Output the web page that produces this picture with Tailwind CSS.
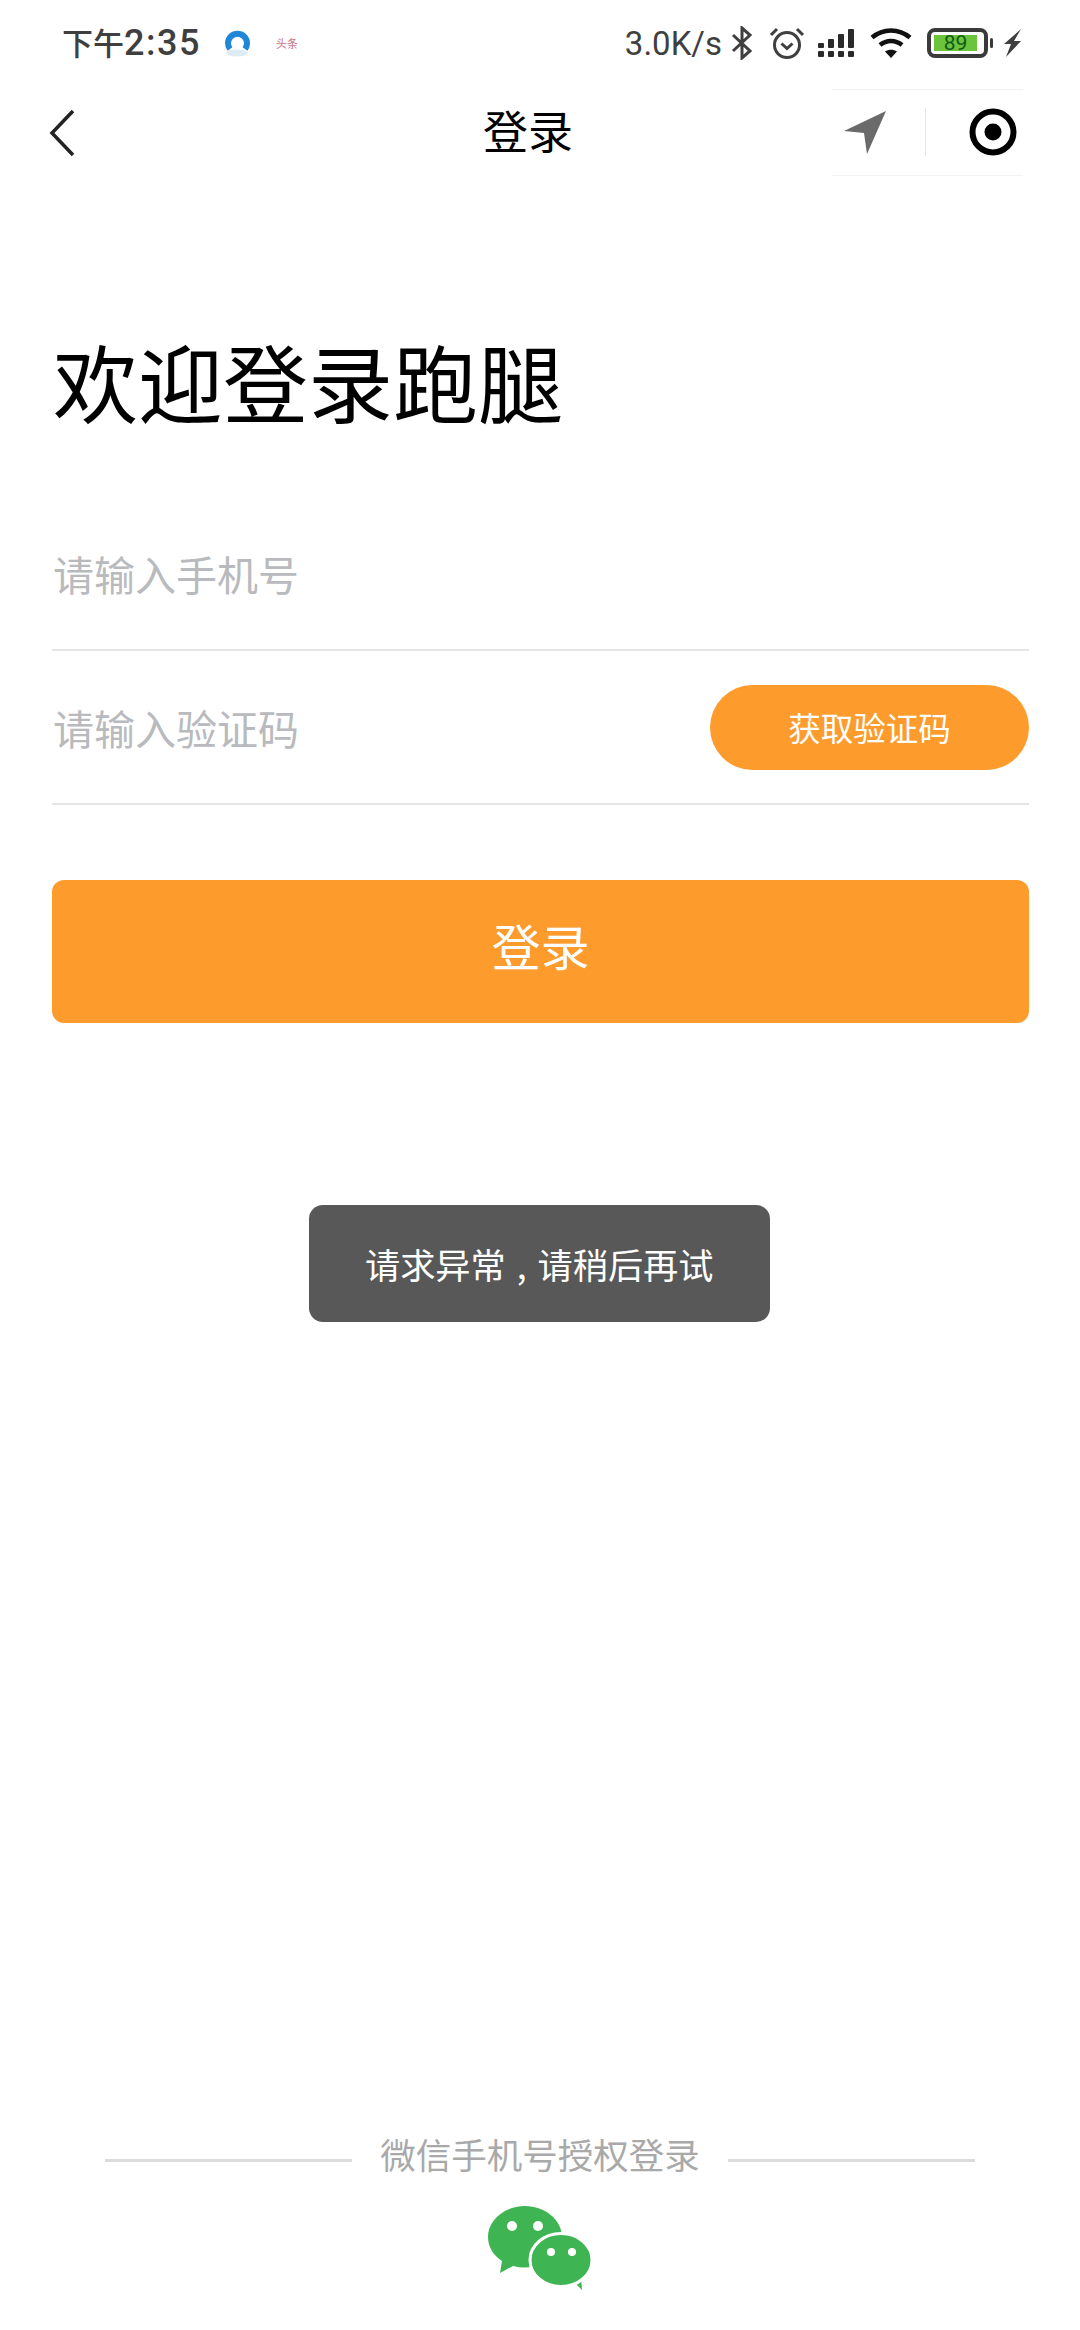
<!DOCTYPE html>
<html lang="zh-CN">
<head>
    <meta charset="UTF-8">
    <meta name="viewport" content="width=device-width, initial-scale=1.0">
    <title>登录</title>
    <script src="https://cdn.jsdelivr.net/npm/@tailwindcss/browser@4"></script>
</head>
<body class="bg-white font-['Noto_Sans_CJK_SC','Noto_Sans',sans-serif]">
    <div class="relative w-[1080px] h-[2330px] flex flex-col overflow-hidden bg-white">
        <!-- Status bar -->
        <div class="h-[86px] flex items-center pl-[62px] pr-[59px] text-[#3f3f3f]">
            <span class="w-[139px] flex items-center whitespace-nowrap font-medium leading-none">
                <span class="text-[31px] mb-[3px]">下午</span>
                <span class="text-[36px] tracking-[1.500px] font-['Roboto',sans-serif]">2:35</span>
            </span>
            <svg class="ml-[23px] w-[26px] h-[28px]" viewBox="0 0 26 28">
                <ellipse cx="13" cy="24" rx="11" ry="3.500" fill="#dcecf2"/>
                <path d="M6 20a9.500 9.500 0 1 1 15 0" fill="none" stroke="#1f86d8" stroke-width="6"/>
            </svg>
            <span class="ml-[26px] text-[11px] leading-none text-[#c9758a]">头条</span>
            <span class="ml-auto text-[33px] leading-none font-['Roboto',sans-serif]">3.0K/s</span>
            <!-- bluetooth -->
            <svg class="ml-[9px] w-[22px] h-[34px]" viewBox="0 0 22 34" fill="none" stroke="#3f3f3f" stroke-width="3">
                <path d="M2 9l17 16-8 7V2l8 7L2 25"/>
            </svg>
            <!-- alarm -->
            <svg class="ml-[16px] w-[36px] h-[34px]" viewBox="0 0 36 34" fill="none" stroke="#3f3f3f" stroke-width="3">
                <circle cx="18" cy="19" r="12.500"/>
                <path d="M12.500 17.500l5.500 5 5.500-5"/>
                <path d="M2 9l6-6M34 9l-6-6"/>
            </svg>
            <!-- signal -->
            <svg class="ml-[13px] w-[36px] h-[28px]" viewBox="0 0 36 28" fill="#2a2a2a">
                <rect x="0" y="14" width="6" height="5" rx="1"/><rect x="0" y="22" width="6" height="6" rx="1"/>
                <rect x="10" y="10" width="6" height="9" rx="1"/><rect x="10" y="22" width="6" height="6" rx="1"/>
                <rect x="20" y="5" width="6" height="14" rx="1"/><rect x="20" y="22" width="6" height="6" rx="1"/>
                <rect x="30" y="0" width="6" height="19" rx="1"/><rect x="30" y="22" width="6" height="6" rx="1"/>
            </svg>
            <!-- wifi -->
            <svg class="ml-[16px] w-[42px] h-[30px]" viewBox="0 0 42 30" fill="none" stroke="#111" stroke-width="4.500">
                <path d="M2 9.500C13 0 29 0 40 9.500"/>
                <path d="M10 17c6.500-5.500 15.500-5.500 22 0"/>
                <path d="M21 30l-6-6.500c3.500-2.500 8.500-2.500 12 0z" fill="#111" stroke="none"/>
            </svg>
            <!-- battery -->
            <div class="ml-[15px] w-[61px] h-[30px] border-[4px] border-[#3a3a3a] rounded-[8px] p-[3px] flex">
                <div class="w-[43px] bg-[#6cc33c] text-[#0f5c14] text-[21px] leading-[16px] text-center font-['Roboto',sans-serif]">89</div>
            </div>
            <div class="ml-[2px] w-[3px] h-[10px] bg-[#3a3a3a] rounded-full"></div>
            <svg class="ml-[10px] w-[18px] h-[28px]" viewBox="0 0 18 28" fill="#3f3f3f">
                <path d="M18 0L1 15h7L3 28l15-16h-7z"/>
            </svg>
        </div>

        <!-- Nav bar -->
        <div class="h-[90px] flex items-center pl-[49px] pr-[57px] pt-[2px]">
            <svg class="w-[26px] h-[48px] mt-[2px]" viewBox="0 0 26 48" fill="none" stroke="#222" stroke-width="3.500">
                <path d="M24 2L3 24l21 22"/>
            </svg>
            <h1 class="ml-[408px] mb-[6px] text-[45px] leading-none font-normal text-black">登录</h1>
            <div class="ml-auto w-[191px] h-[87px] flex items-center border-y border-[#f2f2f2]">
                <div class="w-[93px] pl-[11px] flex">
                    <svg class="w-[44px] h-[44px]" viewBox="0 0 44 44" fill="#6a6a6a">
                        <path d="M43 1L1 21l20 2 3 21z"/>
                    </svg>
                </div>
                <div class="w-px h-[48px] bg-[#e6e6e6]"></div>
                <div class="flex-1 pl-[43px] flex">
                    <svg class="w-[48px] h-[48px]" viewBox="0 0 48 48">
                        <circle cx="24" cy="24" r="20.500" fill="none" stroke="#000" stroke-width="6"/>
                        <circle cx="24" cy="24" r="8.500" fill="#000"/>
                    </svg>
                </div>
            </div>
        </div>

        <!-- Login form -->
        <div class="pl-[52px] pr-[51px] pt-[152px]">
            <h2 class="pl-[1px] text-[85px] leading-[104px] font-normal text-black whitespace-nowrap">欢迎登录跑腿</h2>
            <div class="mt-[65px] h-[154px] pl-[1px] flex items-center border-b-2 border-[#e5e5e5]">
                <span class="text-[41px] leading-none text-[#b9babd]">请输入手机号</span>
            </div>
            <div class="h-[154px] pl-[1px] flex items-center justify-between border-b-2 border-[#e5e5e5]">
                <span class="text-[41px] leading-none text-[#b9babd]">请输入验证码</span>
                <button class="w-[319px] h-[85px] rounded-full bg-[#fd9b2c] text-white text-[32.500px] leading-none">获取验证码</button>
            </div>
            <button class="mt-[75px] w-full h-[143px] pb-[14px] rounded-[12px] bg-[#fd9b2c] text-white text-[49px] leading-none">登录</button>
        </div>

        <!-- Footer -->
        <div class="mt-auto pb-[40px] flex flex-col items-center">
            <div class="flex items-center w-[870px]">
                <div class="flex-1 h-[3px] mt-[12px] bg-[#dcdcdc]"></div>
                <span class="px-[28px] text-[35.500px] leading-[50px] text-[#a9a9a9]">微信手机号授权登录</span>
                <div class="flex-1 h-[3px] mt-[12px] bg-[#dcdcdc]"></div>
            </div>
            <svg class="mt-[27px] w-[105px] h-[84px]" viewBox="0 0 105 84">
                <path d="M37 0C17 0 0 13.500 0 31c0 10 5.500 18.500 14 24l-2 12 13-7c4 1 8 1.500 12 1.500C57 61.500 74 48 74 31S57 0 37 0z" fill="#3fb453"/>
                <path d="M86 76l8 8-1-13z" fill="#3fb453"/>
                <ellipse cx="73" cy="54" rx="31" ry="26.500" fill="#3fb453" stroke="#fff" stroke-width="3"/>
                <circle cx="24" cy="20" r="5" fill="#fff"/><circle cx="50" cy="20" r="5" fill="#fff"/>
                <circle cx="63" cy="46" r="4" fill="#fff"/><circle cx="84" cy="46" r="4" fill="#fff"/>
            </svg>
        </div>

        <!-- Toast -->
        <div class="absolute left-[309px] top-[1205px] w-[461px] h-[117px] rounded-[14px] bg-[#585858] flex items-center pl-[56px] text-white text-[35.200px] leading-none whitespace-nowrap">请求异常<span class="px-[11px]">,</span>请稍后再试</div>
    </div>
</body>
</html>
